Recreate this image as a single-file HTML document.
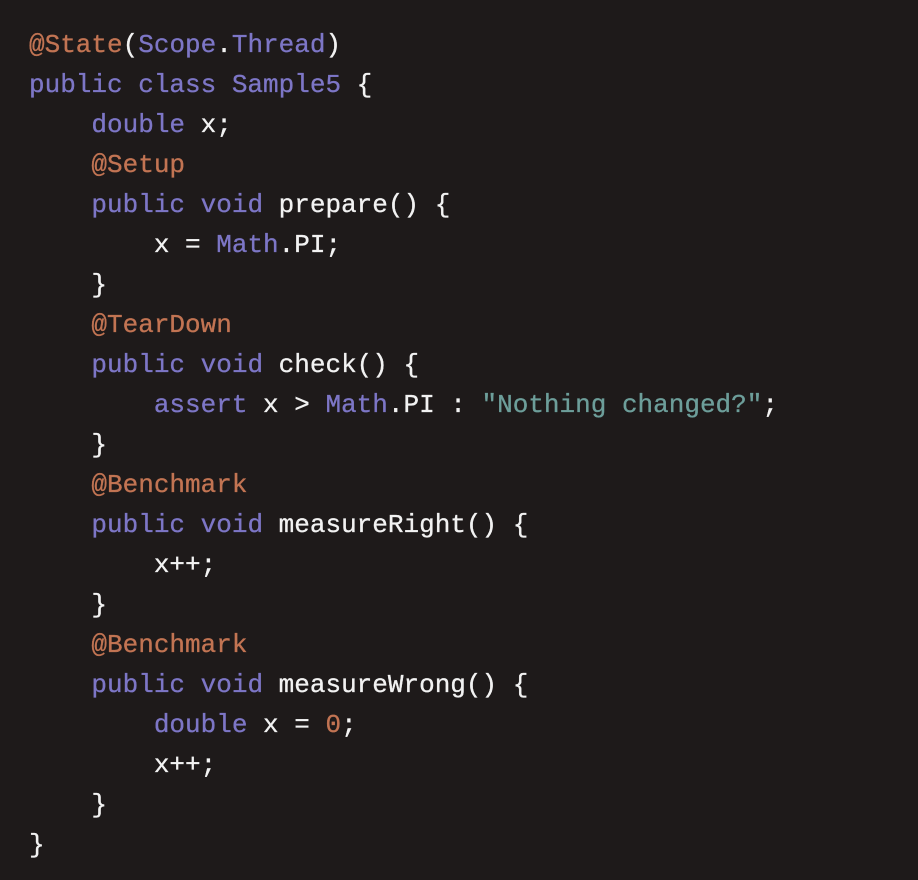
<!DOCTYPE html>
<html><head><style>
html,body{margin:0;padding:0;background:#1e1a1a;width:918px;height:880px;overflow:hidden}
pre{margin:0;padding:25px 0 0 29px;font-family:"Liberation Mono",monospace;font-size:26px;line-height:40px;color:#f2f2f2;-webkit-text-stroke:0.3px currentColor}
.a{color:#c27453}.k{color:#7d76c6}.s{color:#6d9e9a}
</style></head><body><pre><span class="a">@State</span>(<span class="k">Scope</span>.<span class="k">Thread</span>)
<span class="k">public class Sample5</span> {
    <span class="k">double</span> x;
    <span class="a">@Setup</span>
    <span class="k">public void</span> prepare() {
        x = <span class="k">Math</span>.PI;
    }
    <span class="a">@TearDown</span>
    <span class="k">public void</span> check() {
        <span class="k">assert</span> x &gt; <span class="k">Math</span>.PI : <span class="s">"Nothing changed?"</span>;
    }
    <span class="a">@Benchmark</span>
    <span class="k">public void</span> measureRight() {
        x++;
    }
    <span class="a">@Benchmark</span>
    <span class="k">public void</span> measureWrong() {
        <span class="k">double</span> x = <span class="a">0</span>;
        x++;
    }
}</pre></body></html>
